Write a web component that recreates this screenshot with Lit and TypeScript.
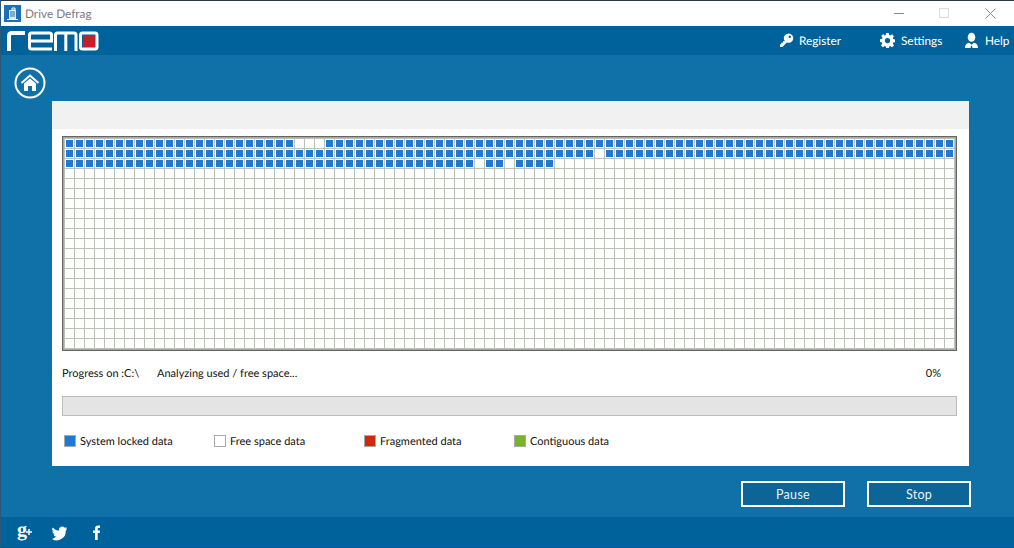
import { LitElement, html, css } from "lit";
import { customElement } from "lit/decorators.js";

const COLS = 89;
const ROWS = 21;
const isUsed = (r: number, c: number) => {
  if (r === 0) return !(c >= 23 && c <= 25);
  if (r === 1) return c !== 53;
  if (r === 2) return c <= 40 || c === 42 || c === 43 || (c >= 45 && c <= 48);
  return false;
};

const legend = [
  ["blue", "System locked data"],
  ["free", "Free space data"],
  ["red", "Fragmented data"],
  ["green", "Contiguous data"],
];

@customElement("app-root")
export class AppRoot extends LitElement {
  static styles = css`
    :host {
      display: block;
      width: 1014px;
      height: 548px;
      overflow: hidden;
      font-family: Lato, Roboto, "Liberation Sans", sans-serif;
      font-size: 11px;
      text-rendering: geometricPrecision;
      color: #111;
    }
    .window {
      height: 548px;
      box-sizing: border-box;
      display: flex;
      flex-direction: column;
      background: #1070a8;
      border-top: 1px solid #2a3a44;
      border-left: 1px solid #2a5a78;
      border-bottom: 1px solid #3a4a50;
    }
    .title {
      height: 25px;
      flex: none;
      background: #fff;
      display: flex;
      align-items: center;
      padding-left: 3px;
      color: #7d7a82;
      font-size: 11.8px;
    }
    .title .appicon { margin-right: 4px; }
    .title .spacer { flex: 1; }
    .winbtns { display: block; margin-right: 16px; }
    .header {
      height: 29px;
      flex: none;
      background: #00629a;
      display: flex;
      align-items: center;
      color: #fff;
      font-size: 11.8px;
    }
    .logo { margin-left: 5px; display: block; }
    .header .spacer { flex: 1; }
    .nav { display: flex; align-items: center; }
    .nav svg { display: block; flex: none; }
    .nav span { display: block; }
    .register { width: 44px; margin: 0 37px 0 5px; }
    .settings { width: 42px; margin: 0 21px 0 6px; }
    .help { width: 24px; margin: 0 5px 0 6px; }
    .main {
      flex: 1;
      display: flex;
      flex-direction: column;
      min-height: 0;
    }
    .homebar { height: 46px; flex: none; padding: 12px 0 0 13px; box-sizing: border-box; }
    .homebar svg { display: block; }
    .panel {
      margin-left: 51px;
      width: 917px;
      height: 365px;
      flex: none;
      background: #fff;
      display: flex;
      flex-direction: column;
    }
    .band { height: 28px; flex: none; background: #f2f1f1; }
    .map {
      margin: 7px 0 0 10px;
      width: 895px;
      box-sizing: border-box;
      border: 1px solid #666;
      padding: 1px;
      background: #a6a6a6;
      flex: none;
    }
    .grid {
      display: grid;
      grid-template-columns: repeat(${COLS}, 10px);
      grid-auto-rows: 10px;
      background: #fff;
      border-left: 1px solid #bcc2b8;
      border-top: 1px solid #bcc2b8;
    }
    .cell {
      box-sizing: border-box;
      border-right: 1px solid #bcc2b8;
      border-bottom: 1px solid #bcc2b8;
      padding: 1px;
      background-clip: content-box;
    }
    .cell.on { background-color: #1f78d1; }
    .progress {
      display: grid;
      grid-template-columns: 95px 1fr auto;
      margin: 15px 28px 0 10px;
      height: 16px;
      line-height: 16px;
    }
    .bar {
      margin: 14px 12px 0 10px;
      height: 20px;
      box-sizing: border-box;
      background: #e4e4e4;
      border: 1px solid #bcbcbc;
      flex: none;
    }
    .legend {
      display: grid;
      grid-template-columns: repeat(4, 150px);
      margin: 19px 0 0 12px;
    }
    .item { display: flex; align-items: center; gap: 4px; height: 13px; }
    .swatch {
      width: 12px;
      height: 12px;
      align-self: flex-start;
      box-sizing: border-box;
      border: 1px solid #a8a8a8;
      flex: none;
    }
    .swatch.blue { background: #1f78d1; }
    .swatch.free { background: #fff; }
    .swatch.red { background: #cc2a0a; }
    .swatch.green { background: #78b32e; }
    .actions {
      display: flex;
      justify-content: flex-end;
      gap: 22px;
      padding-right: 43px;
      margin-top: 15px;
    }
    button {
      width: 104px;
      height: 26px;
      box-sizing: border-box;
      border: 2px solid #fff;
      background: #0d6496;
      color: #e8f2f8;
      font: inherit;
      font-size: 12.5px;
      letter-spacing: 0.3px;
      padding: 0;
    }
    .footer {
      margin-top: auto;
      height: 30px;
      flex: none;
      background: #00629a;
      display: flex;
      align-items: center;
      color: #fff;
    }
    .footer svg { display: block; }
  `;

  render() {
    const cells = [];
    for (let r = 0; r < ROWS; r++)
      for (let c = 0; c < COLS; c++)
        cells.push(html`<div class="cell ${isUsed(r, c) ? "on" : ""}"></div>`);
    return html`
      <div class="window">
        <div class="title">
          <svg class="appicon" width="17" height="17" viewBox="0 0 17 17">
            <rect width="17" height="17" fill="#1b6fb5" />
            <path d="M5 5h7v9H5z" fill="#dfe9f2" />
            <path d="M6 7h5M6 9h5M6 11h5" stroke="#1b6fb5" />
            <path d="M3 14.5h11M8 3h3v2H8z" stroke="#fff" fill="none" />
          </svg>
          <span>Drive Defrag</span>
          <span class="spacer"></span>
          <svg class="winbtns" width="105" height="25" viewBox="0 0 105 25">
            <path d="M1 12.5h10" stroke="#8a8a8a" />
            <rect x="46.5" y="7.5" width="9" height="9" fill="none" stroke="#dcdcdc" />
            <path d="M92.500 7.500l10 10M102.500 7.500l-10 10" stroke="#8a8a8a" />
          </svg>
        </div>
        <div class="header">
          <svg class="logo" width="93" height="21" viewBox="0 0 93 21">
            <g fill="none" stroke="#fff" stroke-width="3">
              <path d="M3 21V6Q3 3 6 3H19" stroke-width="4" />
              <path d="M46 19H25.500Q23.500 19 23.500 17V5Q23.500 3 25.500 3H43.500Q45.500 3 45.500 5V11H24" />
              <path d="M49.500 21V5Q49.500 3 51.500 3H68Q70 3 70 5V21M59.800 3V21" />
              <rect x="74.500" y="3" width="16.500" height="16" rx="2" />
            </g>
            <rect x="77" y="5" width="12" height="12" fill="#c4202c" />
          </svg>
          <span class="spacer"></span>
          <div class="nav">
            <svg width="15" height="15" viewBox="0 0 16 16" fill="#fff">
              <path d="M10.2 0.5a5 5 0 1 1-1.900 9.600L3.600 15H1v-2.700l1.300-.3.2-1.500 1.600-.2.2-1.500 1.900-.3A5 5 0 0 1 10.200.5z" />
              <circle cx="11.500" cy="4" r="1.300" fill="#00629a" />
            </svg>
            <span class="register">Register</span>
            <svg width="15" height="15" viewBox="0 0 16 16" fill="#fff">
              <path fill-rule="evenodd" d="M6.600 0h2.800l.4 2.200 1.200.5L12.900 1.400l2 2-1.300 1.900.5 1.200 2.200.4v2.800l-2.200.4-.5 1.200 1.300 1.900-2 2-1.900-1.300-1.200.5-.4 2.200H6.600l-.4-2.200-1.200-.5-1.900 1.300-2-2 1.300-1.900-.5-1.200L0 9.400V6.600l2.200-.4.5-1.200-1.300-1.900 2-2L5 2.700l1.200-.5zM8 5.200a2.800 2.800 0 1 0 0 5.600 2.800 2.800 0 0 0 0-5.600z" />
            </svg>
            <span class="settings">Settings</span>
            <svg width="15" height="17" viewBox="0 0 16 17" fill="#fff">
              <ellipse cx="8" cy="5" rx="4" ry="4.800" />
              <path d="M1 16.500c0-3.500 2-5 4.600-5.600L8 13l2.400-2.100c2.600.6 4.600 2.100 4.600 5.600H9l-.5-2.500h-1L7 16.500z" />
            </svg>
            <span class="help">Help</span>
          </div>
        </div>
        <div class="main">
          <div class="homebar">
            <svg width="32" height="32" viewBox="0 0 32 32">
              <circle cx="16" cy="16" r="14.500" fill="none" stroke="#fff" stroke-width="2" />
              <path d="M7.500 16L16 8.500 24.500 16" fill="none" stroke="#fff" stroke-width="2" />
              <path d="M10 16.500L16 11.500l6 5V24h-4v-5h-4v5h-4z" fill="#fff" />
            </svg>
          </div>
          <div class="panel">
            <div class="band"></div>
            <div class="map"><div class="grid">${cells}</div></div>
            <div class="progress">
              <span>Progress on :C:\\</span>
              <span>Analyzing used / free space...</span>
              <span>0%</span>
            </div>
            <div class="bar"></div>
            <div class="legend">
              ${legend.map(
                ([k, t]) => html`<div class="item"><span class="swatch ${k}"></span><span>${t}</span></div>`
              )}
            </div>
          </div>
          <div class="actions">
            <button>Pause</button>
            <button>Stop</button>
          </div>
          <div class="footer">
            <svg width="110" height="30" viewBox="0 0 110 30">
              <text x="16" y="19" font-family="Liberation Serif" font-weight="700" font-size="20" fill="#fff">g</text>
              <path d="M25 15h6M28 12v6" stroke="#fff" stroke-width="1.500" fill="none" />
              <path transform="translate(1 0)" fill="#fff" d="M65 11.200a6.300 6.300 0 0 1-1.800.5 3.100 3.100 0 0 0 1.400-1.700 6.300 6.300 0 0 1-2 .8 3.100 3.100 0 0 0-5.400 2.900 8.900 8.900 0 0 1-6.500-3.300 3.100 3.100 0 0 0 1 4.200 3.100 3.100 0 0 1-1.400-.4 3.100 3.100 0 0 0 2.500 3.100 3.100 3.100 0 0 1-1.400.1 3.100 3.100 0 0 0 2.900 2.200A6.300 6.300 0 0 1 50 21.900a8.900 8.900 0 0 0 13.700-7.900A6.300 6.300 0 0 0 65 11.200z" />
              <path fill="#fff" d="M94 23v-7h-2v-2.500h2v-2c0-2 1.200-3 3-3h2v2.500h-1.300c-.9 0-1 .4-1 1v1.500h2.300l-.3 2.500h-2v7z" />
            </svg>
          </div>
        </div>
      </div>
    `;
  }
}
